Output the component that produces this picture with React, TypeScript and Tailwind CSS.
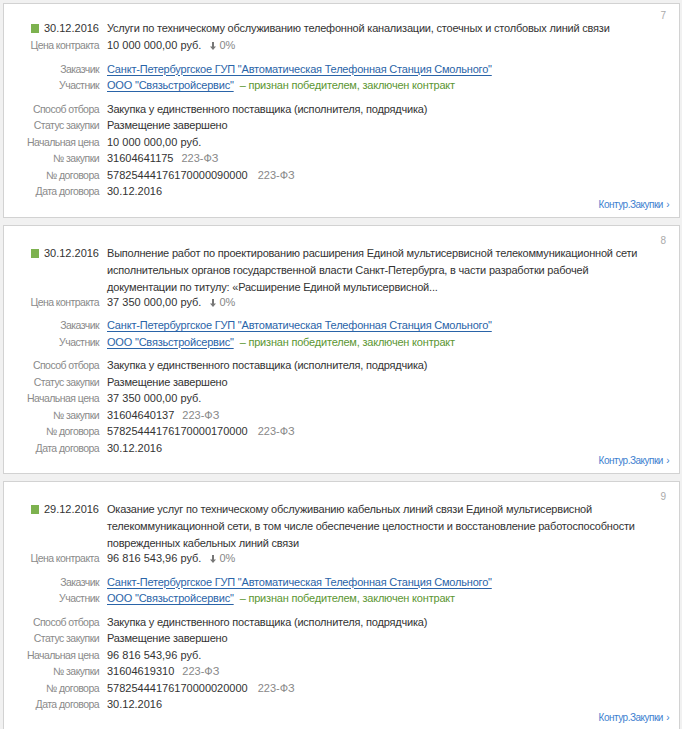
import React from 'react';

interface Tender {
  num: number;
  date: string;
  title: string[];
  price: string;
  purchaseNo: string;
  contractNo: string;
  contractDate: string;
}

const tenders: Tender[] = [
  {
    num: 7,
    date: '30.12.2016',
    title: ['Услуги по техническому обслуживанию телефонной канализации, стоечных и столбовых линий связи'],
    price: '10 000 000,00 руб.',
    purchaseNo: '31604641175',
    contractNo: '57825444176170000090000',
    contractDate: '30.12.2016',
  },
  {
    num: 8,
    date: '30.12.2016',
    title: [
      'Выполнение работ по проектированию расширения Единой мультисервисной телекоммуникационной сети',
      'исполнительных органов государственной власти Санкт-Петербурга, в части разработки рабочей',
      'документации по титулу: «Расширение Единой мультисервисной...',
    ],
    price: '37 350 000,00 руб.',
    purchaseNo: '31604640137',
    contractNo: '57825444176170000170000',
    contractDate: '30.12.2016',
  },
  {
    num: 9,
    date: '29.12.2016',
    title: [
      'Оказание услуг по техническому обслуживанию кабельных линий связи Единой мультисервисной',
      'телекоммуникационной сети, в том числе обеспечение целостности и восстановление работоспособности',
      'поврежденных кабельных линий связи',
    ],
    price: '96 816 543,96 руб.',
    purchaseNo: '31604619310',
    contractNo: '57825444176170000020000',
    contractDate: '30.12.2016',
  },
];

function Label({ children }: { children: React.ReactNode }) {
  return (
    <div className="text-right text-[10.5px] tracking-[-0.55px] text-[#8a8a8a] whitespace-nowrap">{children}</div>
  );
}

function Row({ label, children, className = '' }: { label: string; children: React.ReactNode; className?: string }) {
  return (
    <div className={`grid grid-cols-[95px_1fr] gap-x-[8px] ${className}`}>
      <Label>{label}</Label>
      <div className="text-[11px] text-[#333] whitespace-nowrap">{children}</div>
    </div>
  );
}

// cyrillic runs render a bit narrower in the original, numbers don't
const txt = 'tracking-[-0.2px]';

function TenderCard({ t, first }: { t: Tender; first: boolean }) {
  const multi = t.title.length > 1;
  return (
    <div className={`relative bg-white border border-[#d2d2d2] pb-[6px] ${first ? 'pt-[16px]' : 'pt-[19px]'}`}>
      <span className={`absolute right-[13px] text-[10px] leading-[12px] text-[#aaa] ${first ? 'top-[6px]' : 'top-[9px]'}`}>
        {t.num}
      </span>

      <div className="grid grid-cols-[95px_1fr] gap-x-[8px]">
        <div className="flex items-center justify-end h-[17px]">
          <span className="w-[8px] h-[9px] bg-[#7db24f] mr-[5px]" />
          <span className="text-[11px] text-[#333]">{t.date}</span>
        </div>
        <div className={`text-[11px] text-[#333] leading-[17px] ${txt}`}>
          {t.title.map((line, i) => (
            <div key={i} className="whitespace-nowrap">{line}</div>
          ))}
        </div>
      </div>

      <Row label="Цена контракта" className={multi ? '-mt-[2px]' : ''}>
        {t.price}
        <svg className="inline-block ml-[9px] mr-[3px] align-[-1px] text-[#777]" width="6" height="8" viewBox="0 0 6 8">
          <path d="M2 0h2v4.5h2L3 8 0 4.5h2z" fill="currentColor" />
        </svg>
        <span className="text-[#888]">0%</span>
      </Row>

      <div className="mt-[7px]">
        <Row label="Заказчик">
          <a className={`text-[#2a64a8] underline underline-offset-2 decoration-[#2a64a8] ${txt}`}>
            Санкт-Петербургское ГУП "Автоматическая Телефонная Станция Смольного"
          </a>
        </Row>
        <Row label="Участник">
          <a className={`text-[#2a64a8] underline underline-offset-2 decoration-[#2a64a8] ${txt}`}>
            ООО "Связьстройсервис"
          </a>
          <span className={`ml-[6px] text-[#5b9632] ${txt}`}>– признан победителем, заключен контракт</span>
        </Row>
      </div>

      <div className="mt-[7px]">
        <Row label="Способ отбора">
          <span className={txt}>Закупка у единственного поставщика (исполнителя, подрядчика)</span>
        </Row>
        <Row label="Статус закупки">
          <span className={txt}>Размещение завершено</span>
        </Row>
        <Row label="Начальная цена">{t.price}</Row>
        <Row label="№ закупки">
          {t.purchaseNo}
          <span className="ml-[8px] text-[#888]">223-ФЗ</span>
        </Row>
        <Row label="№ договора">
          {t.contractNo}
          <span className="ml-[10px] text-[#888]">223-ФЗ</span>
        </Row>
        <Row label="Дата договора">{t.contractDate}</Row>
      </div>

      <div className="-mt-[1px] text-right pr-[10px] text-[10px] leading-[12px] tracking-[-0.5px] text-[#3d7fd0]">
        Контур.Закупки <span className="ml-[1px]">›</span>
      </div>
    </div>
  );
}

export default function App() {
  return (
    <div
      className="min-h-screen bg-[#f1f1f1] pt-[3px] pl-[3px] pr-[2px] flex flex-col gap-[7px] leading-[16.5px]"
      style={{ fontFamily: '"Liberation Sans", Arial, sans-serif' }}
    >
      {tenders.map((t, i) => (
        <TenderCard key={t.num} t={t} first={i === 0} />
      ))}
    </div>
  );
}
